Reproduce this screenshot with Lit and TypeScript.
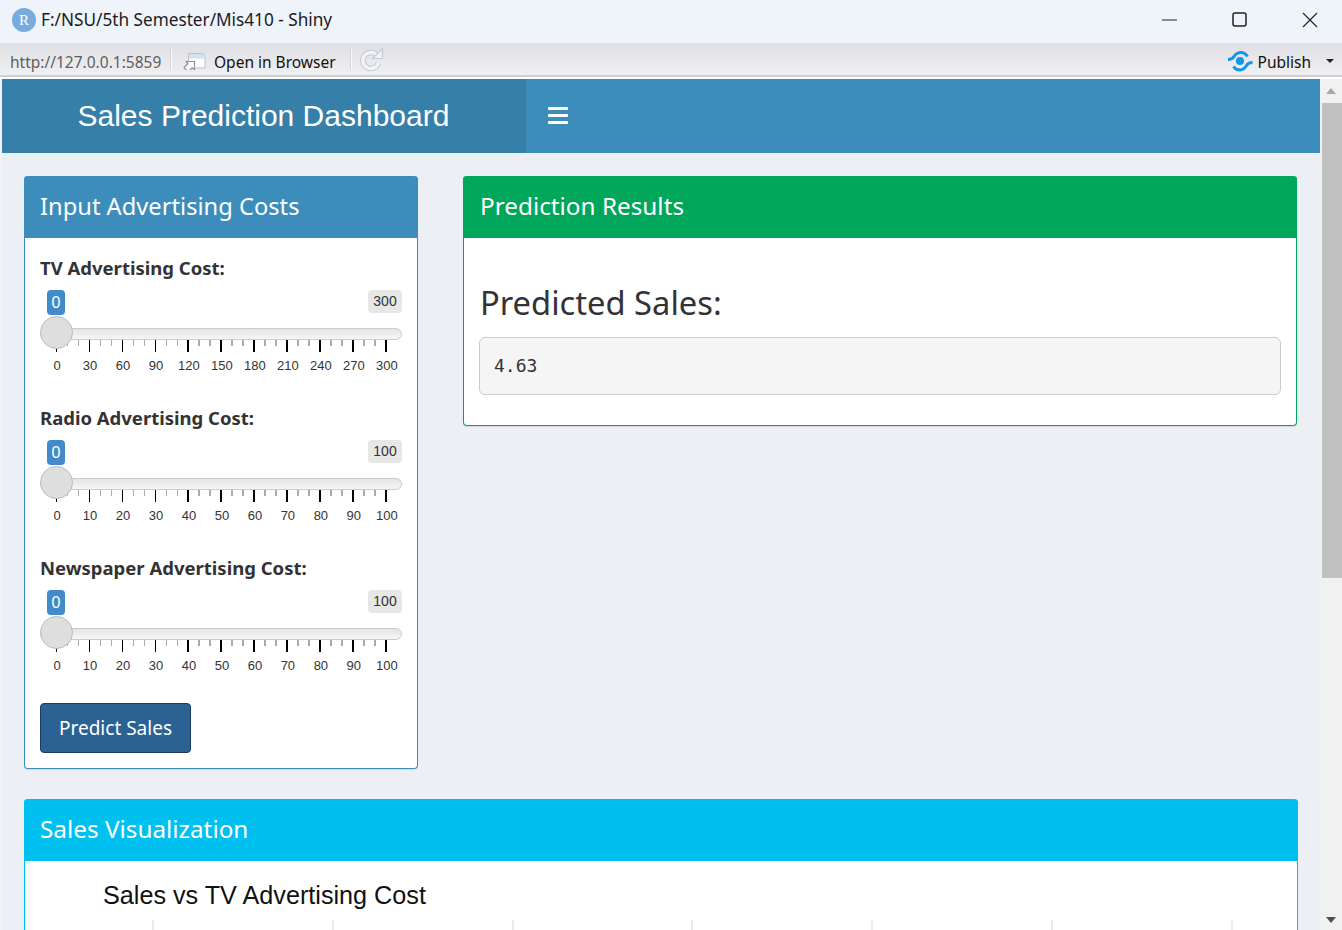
import { LitElement, html, css, svg } from 'lit';
import { customElement, property } from 'lit/decorators.js';

const SANS = css`'Noto Sans', 'Open Sans', sans-serif`;

// Slider input in the style of ion.rangeSlider, one per advertising channel
@customElement('range-input')
export class RangeInput extends LitElement {
  static override styles = css`
    :host {
      display: block;
      height: 150px;
    }
    .label {
      font-family: ${SANS};
      font-weight: 700;
      font-size: 18.5px;
      line-height: 26px;
      color: #333;
      margin: 0 0 9px;
    }
    .pills {
      display: flex;
      justify-content: space-between;
      align-items: flex-start;
      height: 25px;
      padding-left: 7px;
      font-family: 'Liberation Sans', Arial, sans-serif;
    }
    .from {
      background: #428bca;
      color: #fff;
      font-size: 16px;
      line-height: 25px;
      width: 18px;
      text-align: center;
      border-radius: 4px;
    }
    .to {
      background: #e7e7e7;
      color: #333;
      font-size: 14px;
      line-height: 23px;
      width: 34px;
      text-align: center;
      border-radius: 4px;
    }
    .rail {
      position: relative;
      height: 60px;
    }
    .track {
      position: absolute;
      left: 0;
      right: 0;
      top: 13px;
      height: 12px;
      border-radius: 6px;
      border: 1px solid #ccc;
      box-sizing: border-box;
      background: linear-gradient(#e4e4e4, #f6f6f6);
    }
    .handle {
      position: absolute;
      left: 0;
      top: 1px;
      width: 33px;
      height: 33px;
      box-sizing: border-box;
      border-radius: 50%;
      background: #dedede;
      border: 1px solid #bbb;
    }
    svg {
      position: absolute;
      left: 0;
      top: 0;
      width: 362px;
      height: 60px;
    }
    .tick-label {
      position: absolute;
      top: 43px;
      transform: translateX(-50%);
      font: 13px/15px 'Liberation Sans', Arial, sans-serif;
      color: #333;
    }
  `;

  @property() label = '';
  @property({ type: Number }) max = 100;
  @property({ type: Number }) minorPerMajor = 2;

  override render() {
    const x0 = 16.4;
    const major = 32.97;
    const n = 10 * (this.minorPerMajor + 1);
    const ticks = [];
    for (let i = 0; i <= n; i++) {
      const isMajor = i % (this.minorPerMajor + 1) === 0;
      const x = Math.round(x0 + (i * major) / (this.minorPerMajor + 1));
      const wide = x >= 140;
      ticks.push(svg`<rect x=${wide ? x - 1 : x} y="25" width=${wide ? 2 : 1} height=${isMajor ? 12 : 6}
        fill=${isMajor ? '#000' : '#aaa'} shape-rendering="crispEdges"></rect>`);
    }
    const labels = Array.from({ length: 11 }, (_, i) => i);
    return html`
      <div class="label">${this.label}</div>
      <div class="pills">
        <span class="from">0</span>
        <span class="to">${this.max}</span>
      </div>
      <div class="rail">
        <div class="track"></div>
        <svg viewBox="0 0 362 60">${ticks}</svg>
        <div class="handle"></div>
        ${labels.map(
          (i) => html`<span class="tick-label" style="left:${x0 + 0.7 + i * major}px">${(i * this.max) / 10}</span>`
        )}
      </div>
    `;
  }
}

@customElement('app-root')
export class AppRoot extends LitElement {
  static override styles = css`
    :host {
      display: block;
      width: 1342px;
      height: 930px;
      overflow: hidden;
      background: #fff;
      font-family: ${SANS};
    }
    .titlebar {
      height: 43px;
      background: #eff3fa;
      display: flex;
      align-items: center;
      padding: 0 0 3px 12px;
      box-sizing: border-box;
      gap: 5px;
      color: #1b1b1b;
      font-size: 17.2px;
      overflow: hidden;
    }
    .title-text {
      flex: 1;
      margin-top: -2px;
    }
    .r-logo {
      width: 24px;
      height: 24px;
      border-radius: 50%;
      background: #79acdd;
      color: #fff;
      font: 15px/24px 'Liberation Serif', serif;
      text-align: center;
    }
    .win-btns {
      display: flex;
      margin-right: -3px;
    }
    .win-btn {
      width: 70px;
      height: 40px;
      display: flex;
      align-items: center;
      justify-content: center;
    }
    .toolbar {
      height: 32px;
      background: linear-gradient(#dfe0e5, #f0f0f1);
      border-bottom: 2px solid #ccd0d8;
      display: flex;
      align-items: center;
      font-size: 15.5px;
      box-sizing: content-box;
    }
    .url {
      color: #5e5e5e;
      padding: 6px 0 0 10px;
      width: 160px;
    }
    .sep {
      width: 2px;
      height: 22px;
      background: #d2d2d6;
      border-right: 1px solid #fbfbfb;
      box-sizing: border-box;
    }
    .open {
      display: flex;
      align-items: center;
      gap: 8px;
      width: 178px;
      padding-left: 11px;
      box-sizing: border-box;
      color: #111;
    }
    .open span {
      padding-top: 6px;
    }
    .open svg {
      margin-top: 3px;
    }
    .reload {
      margin-left: 8px;
      display: flex;
    }
    .publish {
      margin-left: auto;
      display: flex;
      align-items: center;
      color: #111;
      padding-right: 8px;
    }
    .publish svg {
      margin-top: 4px;
    }
    .publish span {
      margin: 0 15px 0 5px;
      padding-top: 6px;
    }
    .caret {
      width: 0;
      height: 0;
      margin-top: 4px;
      border-left: 4px solid transparent;
      border-right: 4px solid transparent;
      border-top: 4px solid #222;
    }
    .app {
      display: flex;
      height: 853px;
      margin-top: 2px;
      padding-left: 2px;
      background: #f1f3f8;
    }
    .page {
      flex: 1;
      min-width: 0;
      overflow: hidden;
      background: #ecf0f5;
    }
    .header {
      display: flex;
      height: 74px;
      background: #3c8dbc;
      color: #fff;
    }
    .logo {
      width: 524px;
      background: #367fa9;
      font: 30px/74px 'Liberation Sans', Arial, sans-serif;
      padding-left: 75.5px;
      box-sizing: border-box;
      white-space: nowrap;
    }
    .burger {
      margin-left: 22px;
      padding-bottom: 2px;
      width: 20px;
      display: flex;
      flex-direction: column;
      justify-content: center;
      gap: 4px;
    }
    .burger i {
      display: block;
      height: 3px;
      background: #fff;
      border-radius: 1px;
    }
    .content {
      padding: 23px 22px 0;
    }
    .row {
      display: grid;
      grid-template-columns: 394px 834px;
      column-gap: 45px;
      align-items: start;
      margin-bottom: 30px;
    }
    .box {
      border: 1px solid var(--c);
      border-top: 0;
      border-radius: 4px;
      background: #fff;
      box-shadow: 0 1px 1px rgba(0, 0, 0, 0.1);
    }
    .box-head {
      background: var(--c);
      margin: 0 -1px;
      height: 62px;
      padding-left: 16px;
      border-radius: 4px 4px 0 0;
      color: #fff;
      font-size: 24px;
      line-height: 60px;
    }
    .blue {
      --c: #3c8dbc;
    }
    .blue .box-head {
      font-size: 23.7px;
    }
    .green {
      --c: #00a65a;
    }
    .green .box-head {
      padding-left: 17px;
      font-size: 24.3px;
    }
    .cyan {
      --c: #00c0ef;
    }
    .cyan .box-head {
      font-size: 24.3px;
    }
    .inputs {
      padding: 17px 15px 15px;
    }
    .predict {
      display: block;
      width: 151px;
      height: 50px;
      margin-top: -2px;
      background: #2a6293;
      border: 1px solid #1c3e5c;
      border-radius: 4px;
      color: #fff;
      font-family: ${SANS};
      font-size: 19px;
    }
    .result {
      padding: 43px 15px 30px;
    }
    .result h3 {
      margin: 0 0 13px;
      padding-left: 1px;
      font-weight: 400;
      font-size: 32.7px;
      line-height: 43px;
      color: #333;
    }
    .result pre {
      margin: 0;
      height: 58px;
      box-sizing: border-box;
      padding: 0 14px;
      font: 18px/56px 'DejaVu Sans Mono', monospace;
      color: #333;
      background: #f5f5f5;
      border: 1px solid #ccc;
      border-radius: 6px;
    }
    .plot-title {
      font: 25.2px/34px 'Liberation Sans', Arial, sans-serif;
      color: #111;
      padding: 17px 0 0 78px;
    }
    .plot-grid {
      display: block;
      width: 1272px;
      height: 40px;
      margin-top: 8px;
    }
    .scrollbar {
      width: 22px;
      background: #f1f1f1;
      display: flex;
      flex-direction: column;
      align-items: center;
    }
    .arrow {
      height: 24px;
      width: 100%;
      display: flex;
      align-items: center;
      justify-content: center;
      flex: none;
    }
    .thumb {
      width: 20px;
      margin-left: 2px;
      height: 475px;
      background: #c1c1c1;
      flex: none;
    }
    .spacer {
      flex: 1;
    }
  `;

  override render() {
    const gridXs = [127, 307, 487, 666, 846, 1026, 1206];
    return html`
      <div class="titlebar">
        <div class="r-logo">R</div>
        <div class="title-text">F:/NSU/5th Semester/Mis410 - Shiny</div>
        <div class="win-btns">
          <div class="win-btn">
            <svg width="16" height="16" viewBox="0 0 16 16"><path d="M0 8h15" stroke="#222" stroke-width="1"/></svg>
          </div>
          <div class="win-btn">
            <svg width="16" height="16" viewBox="0 0 16 16"><rect x="1" y="1" width="13" height="13" rx="2" fill="none" stroke="#222" stroke-width="1.5"/></svg>
          </div>
          <div class="win-btn">
            <svg width="16" height="16" viewBox="0 0 16 16"><path d="M1 1l14 14M15 1L1 15" stroke="#222" stroke-width="1.2"/></svg>
          </div>
        </div>
      </div>
      <div class="toolbar">
        <div class="url">http://127.0.0.1:5859</div>
        <div class="sep"></div>
        <div class="open">
          <svg width="23" height="18" viewBox="0 0 23 18">
            <path d="M5.5 1.5h13.5a3 3 0 0 1 3 3v11.5h-16.5z" fill="#fff" stroke="#bcc0c6"/>
            <path d="M6 2h13a2.500 2.500 0 0 1 2.500 2.500v2h-15.500z" fill="#cfe2f6"/>
            <path d="M1 15.500l4-4-2-2h8.500v8.500l-2.300-2.300-4 4z" fill="#fff" stroke="#8f949b" stroke-width="1.200" stroke-linejoin="round"/>
          </svg>
          <span>Open in Browser</span>
        </div>
        <div class="sep"></div>
        <div class="reload">
          <svg width="24" height="24" viewBox="0 0 24 24" fill="none">
            <path d="M17.500 9a8 8 0 1 0 1 7" stroke="#c3cad4" stroke-width="5.500"/>
            <path d="M17.500 9a8 8 0 1 0 1 7" stroke="#f0f3f7" stroke-width="3.500"/>
            <path d="M22.500 1.500v10h-10z" fill="#f0f3f7" stroke="#c3cad4" stroke-width="1.200" stroke-linejoin="round"/>
          </svg>
        </div>
        <div class="publish">
          <svg width="25" height="21" viewBox="0 0 25 21" fill="none" stroke="#1296e6" stroke-width="3">
            <circle cx="12" cy="10" r="4" fill="#1296e6" stroke="none"/>
            <path d="M0 8.500c3 0 4.500-.5 6-3C8 2.500 11 1.500 13 1.500c3 0 5 1.500 6.500 4"/>
            <path d="M24.500 11.500c-3 0-4.500.5-6 3C16.500 17.500 14 19 12 19c-3 0-5-1-6.500-3.500"/>
          </svg>
          <span>Publish</span>
          <div class="caret"></div>
        </div>
      </div>
      <div class="app">
        <div class="page">
          <div class="header">
            <div class="logo">Sales Prediction Dashboard</div>
            <div class="burger"><i></i><i></i><i></i></div>
          </div>
          <div class="content">
            <div class="row">
              <div class="box blue">
                <div class="box-head">Input Advertising Costs</div>
                <div class="inputs">
                  <range-input label="TV Advertising Cost:" max="300"></range-input>
                  <range-input label="Radio Advertising Cost:" max="100"></range-input>
                  <range-input label="Newspaper Advertising Cost:" max="100"></range-input>
                  <button class="predict">Predict Sales</button>
                </div>
              </div>
              <div class="box green">
                <div class="box-head">Prediction Results</div>
                <div class="result">
                  <h3>Predicted Sales:</h3>
                  <pre>4.63</pre>
                </div>
              </div>
            </div>
            <div class="box cyan">
              <div class="box-head">Sales Visualization</div>
              <div class="plot-title">Sales vs TV Advertising Cost</div>
              <svg class="plot-grid" viewBox="0 0 1272 40">
                ${gridXs.map((x) => svg`<rect x=${x} y="0" width="2" height="40" fill="#ebebeb"></rect>`)}
              </svg>
            </div>
          </div>
        </div>
        <div class="scrollbar">
          <div class="arrow">
            <svg width="12" height="8" viewBox="0 0 12 8"><path d="M6 1l5 6H1z" fill="#a8a8a8"/></svg>
          </div>
          <div class="thumb"></div>
          <div class="spacer"></div>
          <div class="arrow">
            <svg width="12" height="8" viewBox="0 0 12 8"><path d="M6 7L1 1h10z" fill="#505050"/></svg>
          </div>
        </div>
      </div>
    `;
  }
}

declare global {
  interface HTMLElementTagNameMap {
    'app-root': AppRoot;
    'range-input': RangeInput;
  }
}
